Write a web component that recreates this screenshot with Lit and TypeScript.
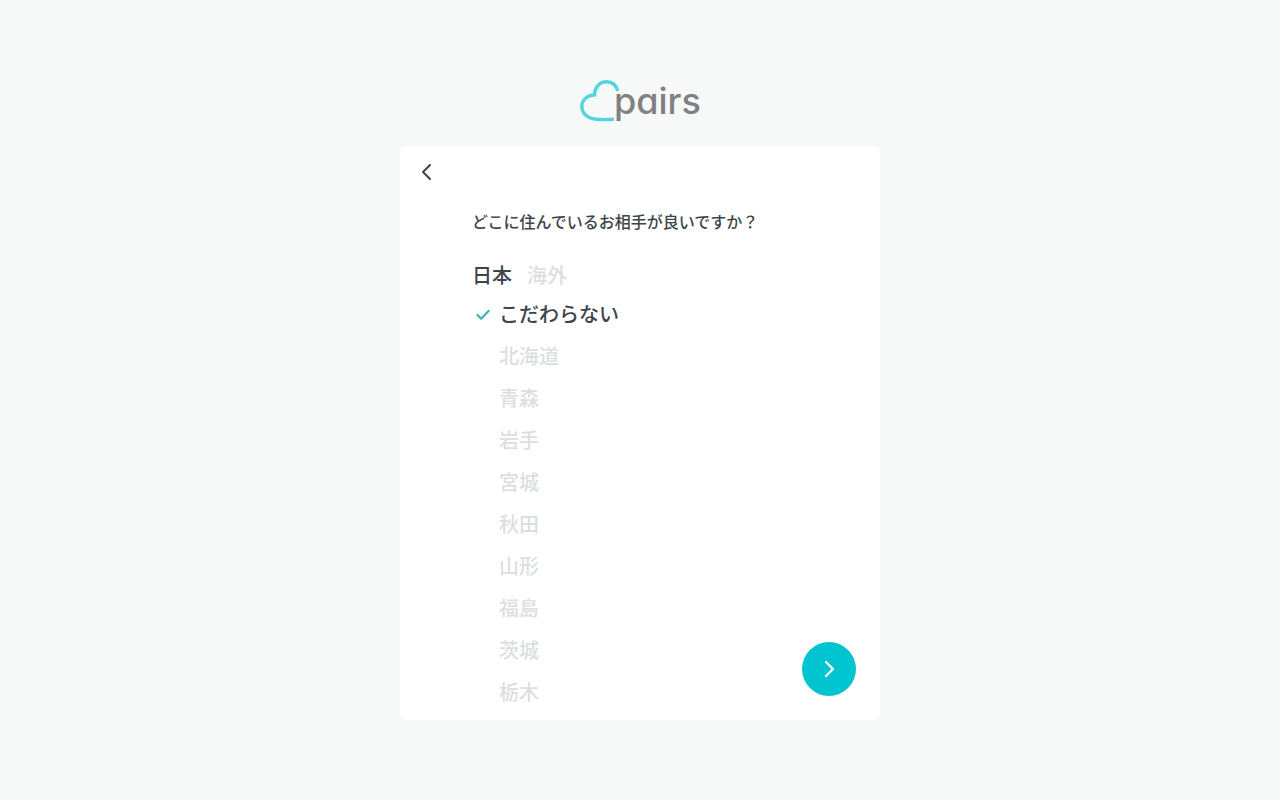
import { LitElement, html, css, svg, nothing } from "lit";
import { customElement, state } from "lit/decorators.js";
import { classMap } from "lit/directives/class-map.js";

const ANY = "こだわらない";
const PREFECTURES = [
  ANY,
  "北海道",
  "青森",
  "岩手",
  "宮城",
  "秋田",
  "山形",
  "福島",
  "茨城",
  "栃木",
];
const AREAS = ["日本", "海外"];

const checkMark = svg`<path d="M2.4 9 6.2 12.8 13.8 4.8" fill="none" stroke="#3cb3b5" stroke-width="2.2" stroke-linecap="round" stroke-linejoin="round" />`;

@customElement("app-root")
export class AppRoot extends LitElement {
  static styles = css`
    :host {
      display: block;
      box-sizing: border-box;
      min-height: 100vh;
      padding: 80px 16px;
      background: #f7f9f8;
      color: #3d454b;
      font-family: "Noto Sans CJK JP", sans-serif;
      font-weight: 500;
    }
    * {
      box-sizing: border-box;
    }
    button {
      border: 0;
      padding: 0;
      background: none;
      color: inherit;
      font: inherit;
      cursor: pointer;
    }
    svg {
      display: block;
    }
    .logo {
      width: 120px;
      margin: 0 auto 24px;
    }
    .wordmark {
      font-family: Inter, sans-serif;
      font-size: 36px;
      font-weight: 500;
      font-feature-settings: "cv11";
      fill: #808080;
    }
    .card {
      position: relative;
      max-width: 480px;
      margin: 0 auto;
      padding-bottom: 7px;
      border-radius: 8px;
      background: #fff;
    }
    .bar {
      display: flex;
      align-items: center;
      height: 52px;
      padding: 0 12px;
    }
    .back {
      display: grid;
      place-items: center;
      width: 28px;
      height: 28px;
    }
    .content {
      padding: 11px 72px 0;
    }
    h1 {
      margin: 0;
      font-size: 16px;
      line-height: 24px;
      font-weight: inherit;
    }
    .tabs {
      display: flex;
      gap: 15px;
      margin-top: 28px;
      font-size: 20px;
      line-height: 28px;
    }
    .tab {
      color: #dbdfe2;
    }
    .tab.active {
      color: #3d454b;
    }
    .list {
      margin: 4px 0 0;
      padding: 0;
      list-style: none;
    }
    .option {
      display: flex;
      align-items: center;
      gap: 8px;
      height: 42px;
      padding-left: 3px;
      font-size: 20px;
      line-height: 28px;
      color: #dbdfe2;
      cursor: pointer;
    }
    .option.chosen {
      color: #3d454b;
    }
    .box {
      display: grid;
      width: 16px;
      height: 16px;
    }
    .box > * {
      grid-area: 1 / 1;
      width: 16px;
      height: 16px;
      margin: 0;
    }
    .box input {
      opacity: 0;
      cursor: pointer;
    }
    .next {
      position: absolute;
      right: 24px;
      bottom: 24px;
      display: grid;
      place-items: center;
      width: 54px;
      height: 54px;
      border-radius: 50%;
      background: #00c4cf;
    }
  `;

  @state() private area = AREAS[0];
  @state() private chosen = new Set<string>([ANY]);

  private toggle(name: string) {
    const next = new Set(this.chosen);
    if (name === ANY) {
      next.clear();
    } else {
      next.delete(ANY);
      if (!next.delete(name)) next.add(name);
    }
    if (next.size === 0) next.add(ANY);
    this.chosen = next;
  }

  private renderTab(name: string) {
    const active = this.area === name;
    return html`<button
      type="button"
      class=${classMap({ tab: true, active })}
      aria-pressed=${active}
      @click=${() => (this.area = name)}
    >${name}</button>`;
  }

  private renderOption(name: string) {
    const chosen = this.chosen.has(name);
    return html`<li>
      <label class=${classMap({ option: true, chosen })}>
        <span class="box">
          <svg viewBox="0 0 16 16" aria-hidden="true">${chosen ? checkMark : nothing}</svg>
          <input type="checkbox" .checked=${chosen} @change=${() => this.toggle(name)} />
        </span>
        <span>${name}</span>
      </label>
    </li>`;
  }

  render() {
    return html`
      <header class="logo">
        <svg width="120" height="42" viewBox="0 0 120 42">
          <path
            d="M33.8 39.2C28 39.7 19 39.8 13.5 38.8C6.5 37.5 1.8 32.8 1.8 26.6C1.8 20 7 15.2 14.6 14.8C14.4 7.6 19.5 1.8 26.6 1.8C32 1.8 36 5 37.9 11"
            fill="none"
            stroke="#52d5de"
            stroke-width="3.4"
          />
          <text class="wordmark" x="34" y="34">pairs</text>
        </svg>
      </header>
      <main class="card">
        <div class="bar">
          <button type="button" class="back" aria-label="戻る">
            <svg width="12" height="18" viewBox="0 0 12 18" aria-hidden="true">
              <path d="M10 2 3 9l7 7" fill="none" stroke="#3d454b" stroke-width="2" stroke-linecap="round" stroke-linejoin="round" />
            </svg>
          </button>
        </div>
        <div class="content">
          <h1>どこに住んでいるお相手が良いですか？</h1>
          <div class="tabs">${AREAS.map((a) => this.renderTab(a))}</div>
          <ul class="list">
            ${PREFECTURES.map((p) => this.renderOption(p))}
          </ul>
        </div>
        <button type="button" class="next" aria-label="次へ">
          <svg width="12" height="18" viewBox="0 0 12 18" aria-hidden="true">
            <path d="m3 2 7 7-7 7" fill="none" stroke="#fff" stroke-width="2.2" stroke-linecap="round" stroke-linejoin="round" />
          </svg>
        </button>
      </main>
    `;
  }
}
